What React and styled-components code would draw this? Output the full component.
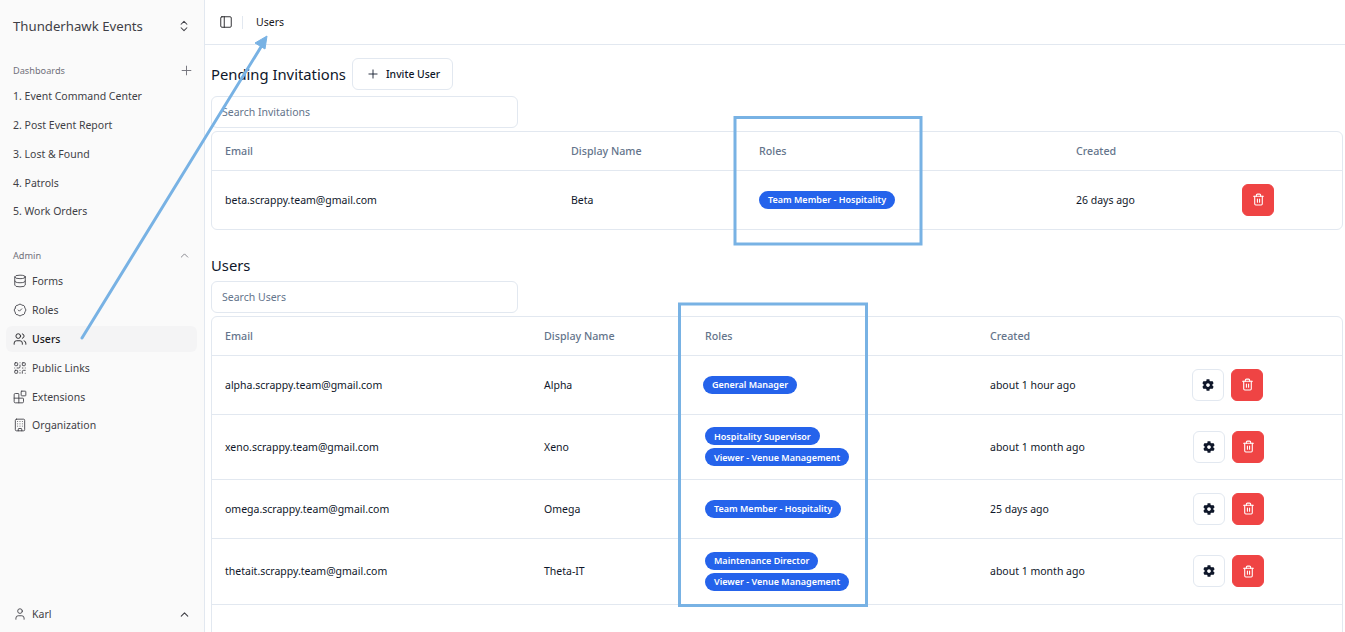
import React from 'react'
import styled, { createGlobalStyle } from 'styled-components'
import {
  PanelLeft,
  ChevronsUpDown,
  Plus,
  ChevronUp,
  Database,
  BadgeCheck,
  Users,
  QrCode,
  Blocks,
  Building,
  User,
  Trash2,
} from 'lucide-react'
import { FaCog } from 'react-icons/fa'

const fontStack = '"Noto Sans", Inter, "Liberation Sans", sans-serif'

const GlobalStyle = createGlobalStyle`
  html, body {
    margin: 0;
    height: 100%;
    overflow: hidden;
    background: #fff;
  }
  body {
    font-family: ${fontStack};
    color: #0f172a;
  }
  * { box-sizing: border-box; }
`

const Page = styled.div`
  position: relative;
  display: flex;
  width: 1345px;
  height: 632px;
  overflow: hidden;
`

const Sidebar = styled.aside`
  width: 205px;
  flex: none;
  display: flex;
  flex-direction: column;
  background: #fafafa;
  border-right: 1px solid #e2e8f0;
  color: #3f3f46;
`

const Brand = styled.div`
  height: 52px;
  padding: 0 13px;
  display: flex;
  align-items: center;
  justify-content: space-between;
  font-size: 13.2px;
  color: #3f3f46;
`

const GroupHead = styled.div`
  height: 26px;
  margin-top: ${props => props.$top || 0}px;
  padding: 0 13px;
  display: flex;
  align-items: center;
  justify-content: space-between;
  font-size: 9.2px;
  color: #71717a;
`

const AddIcon = styled(Plus)`
  margin-right: -3px;
`

const NavItem = styled.div`
  height: 26px;
  margin: 0 7px 2.9px 6px;
  padding: 0 7px 1px;
  display: flex;
  align-items: center;
  gap: 5px;
  border-radius: 6px;
  font-size: 10.5px;
  font-weight: ${props => (props.$active ? 500 : 400)};
  background: ${props => (props.$active ? '#f4f4f5' : 'transparent')};
  color: ${props => (props.$active ? '#18181b' : '#3f3f46')};

  svg { flex: none; }
`

const SideFoot = styled.div`
  margin-top: auto;
  height: 36px;
  padding: 0 13px;
  display: flex;
  align-items: center;
  gap: 5px;
  font-size: 10.5px;

  svg:last-child { margin-left: auto; }
`

const Main = styled.main`
  flex: 1;
  min-width: 0;
  display: flex;
  flex-direction: column;
`

const Topbar = styled.header`
  height: 45px;
  flex: none;
  padding: 0 14px;
  display: flex;
  align-items: center;
  border-bottom: 1px solid #e2e8f0;
  font-size: 10.5px;
  color: #18181b;
`

const Divider = styled.span`
  width: 1px;
  height: 13px;
  margin: 0 13px 0 9px;
  background: #e2e8f0;
`

const Content = styled.div`
  padding: 13px 2px 0 6px;
`

const TitleRow = styled.div`
  display: flex;
  align-items: center;
  gap: 6px;
  height: ${props => (props.$compact ? 20 : 32)}px;
  margin-top: ${props => (props.$compact ? 25 : 0)}px;
`

const Title = styled.h2`
  margin: 0;
  font-size: 14.8px;
  font-weight: 400;
  color: #0f172a;
`

const OutlineButton = styled.button`
  height: 32px;
  padding: 0 12px 0 13px;
  display: inline-flex;
  align-items: center;
  gap: 6px;
  background: #fff;
  border: 1px solid #e2e8f0;
  border-radius: 6px;
  font: 500 10.4px ${fontStack};
  color: #0f172a;
`

const SearchInput = styled.input`
  display: block;
  width: 307px;
  height: 32px;
  margin-top: 6px;
  padding: 0 10px 1px;
  border: 1px solid #e2e8f0;
  border-radius: 6px;
  font: 400 10.5px ${fontStack};
  background: #fff;

  &::placeholder { color: #64748b; opacity: 1; }
`

const Card = styled.div`
  margin-top: 3px;
  border: 1px solid #e2e8f0;
  border-radius: 6px;
  border-bottom-left-radius: ${props => (props.$open ? 0 : 6)}px;
  border-bottom-right-radius: ${props => (props.$open ? 0 : 6)}px;
  min-height: ${props => props.$minHeight || 0}px;
`

const Table = styled.table`
  width: 100%;
  table-layout: fixed;
  border-collapse: collapse;
  font-size: 10.5px;
`

const Th = styled.th`
  height: 38px;
  padding: 0 13px;
  text-align: left;
  font-size: 10.7px;
  font-weight: 500;
  color: #64748b;
  border-bottom: 1px solid #e2e8f0;
`

const Tr = styled.tr`
  height: ${props => props.$height}px;
  border-bottom: 1px solid #e2e8f0;

  &:last-child { border-bottom: ${props => (props.$flush ? 0 : '1px solid #e2e8f0')}; }
`

const Td = styled.td`
  padding: 0 13px;
  color: #0f172a;
`

const Badges = styled.div`
  display: flex;
  flex-direction: column;
  align-items: flex-start;
  gap: 3px;
  margin-left: ${props => props.$shift || 0}px;
`

const Badge = styled.span`
  height: 18px;
  padding: 0 9px;
  display: inline-flex;
  align-items: center;
  border-radius: 999px;
  background: #2563eb;
  color: #fff;
  font-size: 9px;
  font-weight: 600;
  white-space: nowrap;
`

const Actions = styled.div`
  display: flex;
  gap: 7px;
  margin-left: ${props => props.$shift || 0}px;
`

const IconButton = styled.button`
  width: 32px;
  height: 32px;
  padding: 0;
  display: inline-flex;
  align-items: center;
  justify-content: center;
  border-radius: 6px;
  border: 1px solid ${props => (props.$danger ? '#ef4444' : '#e2e8f0')};
  background: ${props => (props.$danger ? '#ef4444' : '#fff')};
  color: ${props => (props.$danger ? '#fff' : '#0f172a')};
`

const Annotations = styled.svg`
  position: absolute;
  inset: 0;
  pointer-events: none;
`

const dashboards = [
  '1. Event Command Center',
  '2. Post Event Report',
  '3. Lost & Found',
  '4. Patrols',
  '5. Work Orders',
]

const adminLinks = [
  { label: 'Forms', Icon: Database },
  { label: 'Roles', Icon: BadgeCheck },
  { label: 'Users', Icon: Users, active: true },
  { label: 'Public Links', Icon: QrCode },
  { label: 'Extensions', Icon: Blocks },
  { label: 'Organization', Icon: Building },
]

const users = [
  { email: 'alpha.scrappy.team@gmail.com', name: 'Alpha', roles: ['General Manager'], created: 'about 1 hour ago', height: 59, badgeShift: -2, actionShift: 0 },
  { email: 'xeno.scrappy.team@gmail.com', name: 'Xeno', roles: ['Hospitality Supervisor', 'Viewer - Venue Management'], created: 'about 1 month ago', height: 65, actionShift: 1 },
  { email: 'omega.scrappy.team@gmail.com', name: 'Omega', roles: ['Team Member - Hospitality'], created: '25 days ago', height: 59, actionShift: 1 },
  { email: 'thetait.scrappy.team@gmail.com', name: 'Theta-IT', roles: ['Maintenance Director', 'Viewer - Venue Management'], created: 'about 1 month ago', height: 66, actionShift: 1 },
]

const App = () => (
  <Page>
    <GlobalStyle />
    <Sidebar>
      <Brand>
        Thunderhawk Events
        <ChevronsUpDown size={14} strokeWidth={1.75} />
      </Brand>
      <GroupHead $top={5.4}>
        Dashboards
        <AddIcon size={15} strokeWidth={1.5} />
      </GroupHead>
      {dashboards.map(label => (
        <NavItem key={label}>{label}</NavItem>
      ))}
      <GroupHead $top={14.6}>
        Admin
        <ChevronUp size={13} strokeWidth={1.5} />
      </GroupHead>
      {adminLinks.map(({ label, Icon, active }) => (
        <NavItem key={label} $active={active}>
          <Icon size={14} strokeWidth={1.5} />
          {label}
        </NavItem>
      ))}
      <SideFoot>
        <User size={14} strokeWidth={1.5} />
        Karl
        <ChevronUp size={13} strokeWidth={2} />
      </SideFoot>
    </Sidebar>
    <Main>
      <Topbar>
        <PanelLeft size={14} strokeWidth={1.5} />
        <Divider />
        Users
      </Topbar>
      <Content>
        <TitleRow>
          <Title>Pending Invitations</Title>
          <OutlineButton>
            <Plus size={14} strokeWidth={1.5} />
            Invite User
          </OutlineButton>
        </TitleRow>
        <SearchInput placeholder="Search Invitations" />
        <Card>
          <Table>
            <colgroup>
              <col style={{ width: 346 }} />
              <col style={{ width: 188 }} />
              <col style={{ width: 317 }} />
              <col style={{ width: 166 }} />
              <col />
            </colgroup>
            <thead>
              <tr>
                <Th>Email</Th>
                <Th>Display Name</Th>
                <Th>Roles</Th>
                <Th>Created</Th>
                <Th />
              </tr>
            </thead>
            <tbody>
              <Tr $height={59} $flush>
                <Td>beta.scrappy.team@gmail.com</Td>
                <Td>Beta</Td>
                <Td>
                  <Badges>
                    <Badge>Team Member - Hospitality</Badge>
                  </Badges>
                </Td>
                <Td>26 days ago</Td>
                <Td>
                  <IconButton $danger aria-label="Delete invitation">
                    <Trash2 size={13} />
                  </IconButton>
                </Td>
              </Tr>
            </tbody>
          </Table>
        </Card>
        <TitleRow $compact>
          <Title>Users</Title>
        </TitleRow>
        <SearchInput placeholder="Search Users" />
        <Card $open $minHeight={400}>
          <Table>
            <colgroup>
              <col style={{ width: 319 }} />
              <col style={{ width: 161 }} />
              <col style={{ width: 285 }} />
              <col style={{ width: 202 }} />
              <col />
            </colgroup>
            <thead>
              <tr>
                <Th>Email</Th>
                <Th>Display Name</Th>
                <Th>Roles</Th>
                <Th>Created</Th>
                <Th />
              </tr>
            </thead>
            <tbody>
              {users.map(user => (
                <Tr key={user.email} $height={user.height}>
                  <Td>{user.email}</Td>
                  <Td>{user.name}</Td>
                  <Td>
                    <Badges $shift={user.badgeShift}>
                      {user.roles.map(role => (
                        <Badge key={role}>{role}</Badge>
                      ))}
                    </Badges>
                  </Td>
                  <Td>{user.created}</Td>
                  <Td>
                    <Actions $shift={user.actionShift}>
                      <IconButton aria-label="Settings">
                        <FaCog size={12} />
                      </IconButton>
                      <IconButton $danger aria-label="Delete user">
                        <Trash2 size={13} />
                      </IconButton>
                    </Actions>
                  </Td>
                </Tr>
              ))}
            </tbody>
          </Table>
        </Card>
      </Content>
    </Main>
    <Annotations width="1345" height="632" viewBox="0 0 1345 632" fill="none" stroke="#78b2e4">
      <rect x="735" y="117.5" width="186" height="126.5" strokeWidth="3" />
      <rect x="679.5" y="304" width="187" height="301.5" strokeWidth="3" />
      <path d="M82 338 L264 42" strokeWidth="3" strokeLinecap="round" />
      <path d="M267 36 L255 43 L265 49 Z" fill="#78b2e4" strokeWidth="1" />
    </Annotations>
  </Page>
)

export default App
